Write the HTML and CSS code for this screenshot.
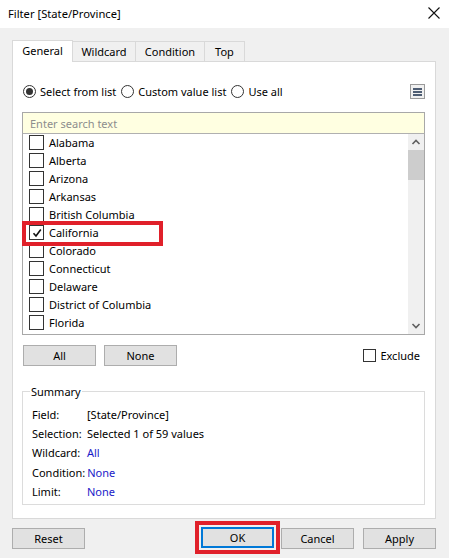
FILE: index.html
```html
<!DOCTYPE html>
<html lang="en">
<head>
  <meta charset="UTF-8">
  <title>Filter [State/Province]</title>
  <link rel="stylesheet" href="styles.css">
</head>
<body>

<div class="dialog">
  <div class="titlebar">
    <span class="title">Filter [State/Province]</span>
    <svg class="close" width="12" height="12" viewBox="0 0 12 12">
      <path d="M0.5 0.5 L11.5 11.5 M11.5 0.5 L0.5 11.5" stroke="#111" stroke-width="1.1" fill="none"/>
    </svg>
  </div>

  <div class="content">
    <div class="tabs">
      <div class="tab active">General</div>
      <div class="tab">Wildcard</div>
      <div class="tab">Condition</div>
      <div class="tab">Top</div>
    </div>

    <div class="panel">
      <div class="mode-row">
        <label class="radio"><span class="dot on"></span>Select from list</label>
        <label class="radio"><span class="dot"></span>Custom value list</label>
        <label class="radio"><span class="dot"></span>Use all</label>
        <span class="menu-btn">
          <svg width="9" height="8" viewBox="0 0 9 8">
            <rect x="0" y="0" width="9" height="2" fill="#4e5d73"/>
            <rect x="0" y="3" width="9" height="2" fill="#4e5d73"/>
            <rect x="0" y="6" width="9" height="2" fill="#4e5d73"/>
          </svg>
        </span>
      </div>

      <div class="search">Enter search text</div>
      <div class="list">
        <div class="items">
          <div class="item"><span class="box"></span>Alabama</div>
          <div class="item"><span class="box"></span>Alberta</div>
          <div class="item"><span class="box"></span>Arizona</div>
          <div class="item"><span class="box"></span>Arkansas</div>
          <div class="item"><span class="box"></span>British Columbia</div>
          <div class="item"><span class="box">
            <svg width="12" height="12" viewBox="0 0 12 12"><path d="M2.5 6.2 L5 9 L9.8 2.5" stroke="#111" stroke-width="1.6" fill="none"/></svg>
          </span>California</div>
          <div class="item"><span class="box"></span>Colorado</div>
          <div class="item"><span class="box"></span>Connecticut</div>
          <div class="item"><span class="box"></span>Delaware</div>
          <div class="item"><span class="box"></span>District of Columbia</div>
          <div class="item"><span class="box"></span>Florida</div>
        </div>
        <div class="scrollbar">
          <svg class="arrow" width="16" height="16" viewBox="0 0 16 16"><path d="M4.5 10 L8 6.5 L11.5 10" stroke="#606060" stroke-width="1.6" fill="none"/></svg>
          <div class="thumb"></div>
          <div class="track"></div>
          <svg class="arrow" width="16" height="16" viewBox="0 0 16 16"><path d="M4.5 6 L8 9.5 L11.5 6" stroke="#606060" stroke-width="1.6" fill="none"/></svg>
        </div>
        <div class="highlight"></div>
      </div>

      <div class="select-row">
        <button class="btn small">All</button>
        <button class="btn small">None</button>
        <label class="exclude"><span class="box"></span>Exclude</label>
      </div>

      <fieldset class="summary">
        <legend>Summary</legend>
        <div class="row"><span class="key">Field:</span><span>[State/Province]</span></div>
        <div class="row"><span class="key">Selection:</span><span>Selected 1 of 59 values</span></div>
        <div class="row"><span class="key">Wildcard:</span><span class="link">All</span></div>
        <div class="row"><span class="key">Condition:</span><span class="link">None</span></div>
        <div class="row"><span class="key">Limit:</span><span class="link">None</span></div>
      </fieldset>
    </div>

    <div class="footer">
      <button class="btn">Reset</button>
      <div class="spacer"></div>
      <div class="ok-mark"><button class="btn default">OK</button></div>
      <button class="btn">Cancel</button>
      <button class="btn">Apply</button>
    </div>
  </div>
</div>

</body>
</html>
```

FILE: styles.css
```css
* {
  box-sizing: border-box;
}

body {
  margin: 0;
  font-family: "Noto Sans", Arial, sans-serif;
  font-size: 11px;
  color: #000;
  background: #f0f0f0;
}

.dialog {
  width: 449px;
  height: 558px;
  background: #f0f0f0;
  overflow: hidden;
}

.titlebar {
  height: 28px;
  background: #fff;
  display: flex;
  align-items: center;
  justify-content: space-between;
  padding: 0 8px 2px 8px;
}

.title {
  font-size: 11.2px;
}

.close {
  margin-right: 1px;
}

.content {
  padding: 11px 13px 0 12px;
}

.tabs {
  display: flex;
  align-items: flex-end;
  height: 22px;
}

.tab {
  height: 20px;
  padding: 0 10px;
  border: 1px solid #d9d9d9;
  border-bottom: none;
  border-left: none;
  display: flex;
  align-items: center;
  justify-content: center;
}

.tab.active {
  height: 22px;
  background: #fff;
  border-left: 1px solid #d9d9d9;
  padding: 0 10px 2px 10px;
  width: 61px;
  margin-bottom: -1px;
}

.tab:nth-child(2) { width: 63px; }
.tab:nth-child(3) { width: 69px; }
.tab:nth-child(4) { width: 40px; }

.panel {
  height: 458px;
  background: #fff;
  border: 1px solid #d9d9d9;
  padding: 0 10px 0 9px;
}

.mode-row {
  display: flex;
  align-items: center;
  height: 38px;
  padding-top: 21px;
  padding-left: 1px;
}

.radio {
  display: flex;
  align-items: center;
  margin-right: 5px;
}

.dot {
  width: 13px;
  height: 13px;
  border: 1px solid #333;
  border-radius: 50%;
  margin-right: 4px;
  display: flex;
  align-items: center;
  justify-content: center;
}

.dot.on::after {
  content: "";
  width: 7px;
  height: 7px;
  border-radius: 50%;
  background: #333;
}

.menu-btn {
  margin-left: auto;
  width: 15px;
  height: 15px;
  border: 1px solid #9a9a9a;
  background: #f0f0f0;
  display: flex;
  align-items: center;
  justify-content: center;
}

.search {
  margin-top: 12px;
  height: 22px;
  background: #ffffe1;
  border: 1px solid #a8a8a8;
  border-bottom: 1px solid #b0b0b0;
  color: #8d8d8d;
  padding: 0 7px;
  display: flex;
  align-items: center;
}

.list {
  position: relative;
  height: 201px;
  border: 1px solid #a8a8a8;
  border-top: none;
  display: flex;
}

.items {
  flex: 1;
}

.item {
  height: 18px;
  display: flex;
  align-items: center;
  padding-left: 6px;
  padding-bottom: 1px;
}

.box {
  width: 15px;
  height: 15px;
  border: 1px solid #333;
  background: #fff;
  margin-right: 5px;
  display: flex;
  align-items: center;
  justify-content: center;
  flex-shrink: 0;
}

.scrollbar {
  width: 16px;
  background: #f0f0f0;
  display: flex;
  flex-direction: column;
}

.thumb {
  height: 30px;
  background: #cdcdcd;
}

.track {
  flex: 1;
}

.highlight {
  position: absolute;
  left: -1px;
  top: 87px;
  width: 141px;
  height: 25px;
  border: 4px solid #e0202a;
}

.select-row {
  display: flex;
  align-items: center;
  margin-top: 10px;
  height: 20px;
}

.btn {
  font-family: "Noto Sans", Arial, sans-serif;
  font-size: 11px;
  width: 73px;
  height: 21px;
  background: #e1e1e1;
  border: 1px solid #adadad;
  padding: 0;
  color: #000;
}

.btn.small {
  margin-left: 1px;
  margin-right: 7px;
}

.exclude {
  margin-left: auto;
  display: flex;
  align-items: center;
  margin-right: 5px;
}

.exclude .box {
  width: 13px;
  height: 13px;
  margin-right: 4px;
}

.summary {
  margin: 19px 0 0 0;
  height: 121px;
  border: 1px solid #dcdcdc;
  padding: 6px 9px 0 9px;
}

.summary legend {
  padding: 0 1px;
  margin-left: -2px;
}

.row {
  height: 19.2px;
  display: flex;
  align-items: center;
}

.key {
  min-width: 55px;
  padding-right: 2px;
  flex-shrink: 0;
}

.link {
  color: #1a1ac8;
}

.footer {
  display: flex;
  align-items: center;
  margin-top: 9px;
  height: 20px;
}

.spacer {
  flex: 1;
}

.ok-mark {
  border: 4px solid #e0202a;
  padding: 2px;
  margin-right: 1px;
  margin-top: -1px;
}

.btn.default {
  border: 2px solid #0078d7;
  display: block;
}

.footer .btn + .btn {
  margin-left: 9px;
}
```
